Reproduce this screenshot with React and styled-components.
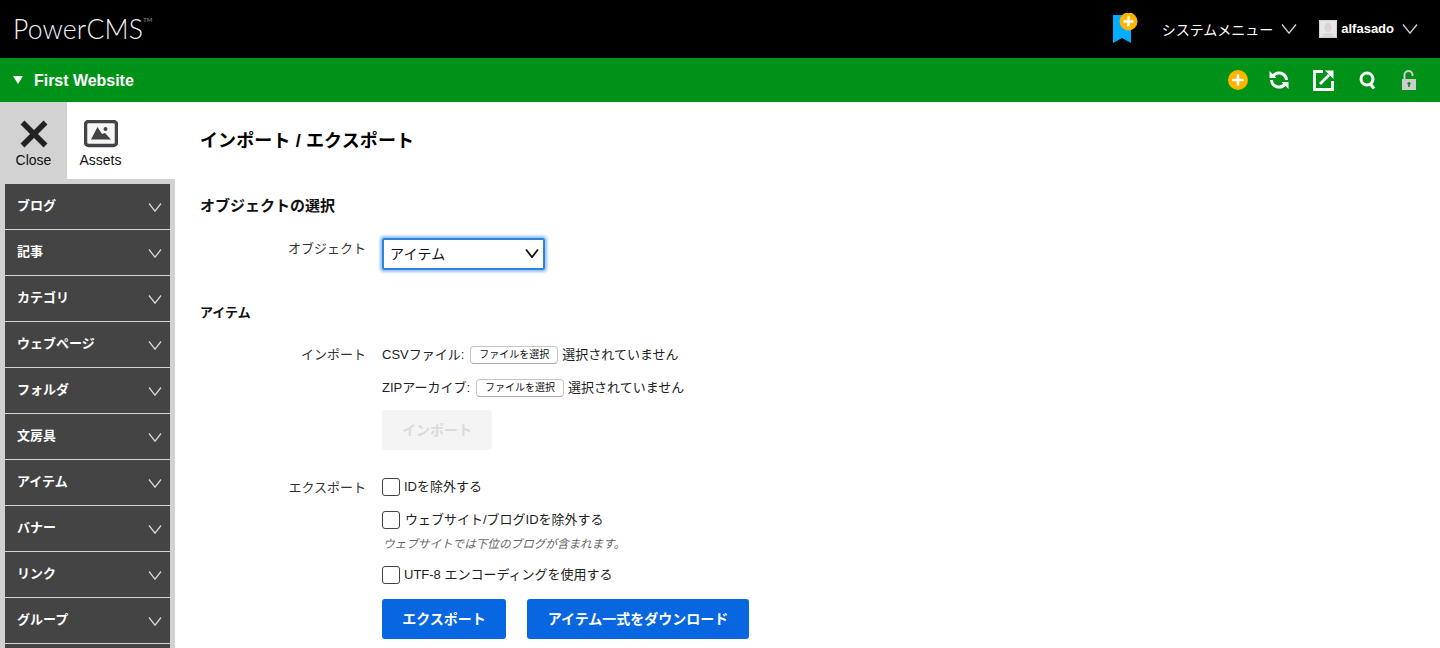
import React from "react";
import styled, { createGlobalStyle } from "styled-components";

const jp = `"Liberation Sans", "Noto Sans CJK JP", sans-serif`;

const GlobalStyle = createGlobalStyle`
  html, body {
    margin: 0;
    height: 100%;
    overflow: hidden;
    background: #fff;
    font-family: ${jp};
    color: #111;
  }
`;

const Page = styled.div`
  height: 648px;
  overflow: hidden;
`;

const TopBar = styled.header`
  height: 58px;
  background: #000;
  display: flex;
  align-items: center;
  padding: 0 22px 0 13px;
`;

const Logo = styled.div`
  font-family: "Lato", "Liberation Sans", sans-serif;
  font-weight: 300;
  font-size: 26.5px;
  letter-spacing: 0.2px;
  color: #f2f2f2;
  display: flex;
  align-items: flex-start;
  sup {
    font-size: 6px;
    line-height: 1;
    margin-top: 4px;
    letter-spacing: 0;
  }
`;

const TopRight = styled.div`
  margin-left: auto;
  display: flex;
  align-items: center;
`;

const TopLink = styled.div`
  display: flex;
  align-items: center;
  gap: ${(p) => p.$gap}px;
  color: #fff;
  font-size: ${(p) => (p.$bold ? 13 : 14)}px;
  font-weight: ${(p) => (p.$bold ? 700 : 400)};
  margin-left: ${(p) => p.$left}px;
  margin-top: -1px;
`;

const UserName = styled.span`
  display: flex;
  align-items: center;
  gap: 4px;
`;

const SiteBar = styled.div`
  height: 44px;
  background: #009118;
  display: flex;
  align-items: center;
  padding: 0 24px 0 13px;
  color: #fff;
`;

const SiteName = styled.div`
  font-size: 16px;
  letter-spacing: -0.03px;
  font-weight: 700;
  margin: 1px 0 0 11px;
`;

const SiteIcons = styled.div`
  margin-left: auto;
  display: flex;
  align-items: center;
`;

const SiteIcon = styled.span`
  display: flex;
  margin-left: ${(p) => p.$left || 0}px;
`;

const Body = styled.div`
  display: flex;
`;

const Sidebar = styled.aside`
  width: 175px;
  flex: none;
`;

const Tabs = styled.div`
  display: flex;
  height: 77px;
`;

const Tab = styled.div`
  width: 67px;
  background: ${(p) => (p.$active ? "#d2d2d2" : "#fff")};
  display: flex;
  flex-direction: column;
  align-items: center;
  padding-top: 18px;
  box-sizing: border-box;
  font-size: 14px;
  color: #111;
  svg {
    display: block;
    margin-bottom: 4px;
  }
`;

const Menu = styled.ul`
  list-style: none;
  margin: 0;
  padding: 5px 5px 0;
  background: #d2d2d2;
  height: 600px;
`;

const MenuItem = styled.li`
  height: 45px;
  margin-bottom: 1px;
  background: #444;
  color: #fff;
  font-size: 13px;
  font-weight: 700;
  display: flex;
  align-items: center;
  justify-content: space-between;
  padding: 0 8px 4px 12px;
  box-sizing: border-box;
  svg {
    margin-top: 5px;
  }
`;

const Main = styled.main`
  flex: 1;
  padding: 28px 0 0 25px;
`;

const Title = styled.h1`
  margin: 0;
  font-size: 18px;
  letter-spacing: 0.12px;
  line-height: 22px;
  font-weight: 700;
  color: #000;
`;

const SectionHead = styled.h2`
  margin: ${(p) => p.$top}px 0 0;
  font-size: ${(p) => p.$size}px;
  line-height: 20px;
  font-weight: 700;
  color: #111;
`;

const FieldRow = styled.div`
  display: grid;
  grid-template-columns: 166px 1fr;
  column-gap: 16px;
  margin-top: ${(p) => p.$top}px;
`;

const FieldLabel = styled.div`
  text-align: right;
  font-size: 13px;
  line-height: 20px;
  color: #333;
  padding-top: ${(p) => p.$pad || 0}px;
`;

const Select = styled.div`
  width: 163px;
  height: 32px;
  box-sizing: border-box;
  border: 2px solid #2f82de;
  box-shadow: 0 0 3px 2px #93c0f2;
  border-radius: 2px;
  display: flex;
  align-items: center;
  justify-content: space-between;
  padding: 0 4px 2px 6px;
  font-size: 14px;
  letter-spacing: 0.2px;
  color: #111;
`;

const FileLine = styled.div`
  display: flex;
  align-items: center;
  height: 20px;
  line-height: 20px;
  margin-bottom: ${(p) => p.$bottom}px;
  font-size: 13px;
  color: #222;
`;

const FileButton = styled.span`
  height: 18px;
  box-sizing: border-box;
  padding: 0 8px;
  margin: 0 4px 0 6px;
  border: 1px solid #c4c4c4;
  border-bottom-color: #aaa;
  border-radius: 4px;
  background: #fff;
  font-size: 10px;
  line-height: 16px;
  color: #111;
`;

const Button = styled.div`
  display: inline-flex;
  align-items: center;
  justify-content: center;
  width: ${(p) => p.$width}px;
  height: 40px;
  padding-bottom: 2px;
  box-sizing: border-box;
  border-radius: 3px;
  background: ${(p) => (p.disabled ? "#f4f4f4" : "#0866e0")};
  color: ${(p) => (p.disabled ? "#dadada" : "#fff")};
  font-size: 14px;
  font-weight: 700;
`;

const CheckLine = styled.label`
  display: flex;
  align-items: center;
  height: 18px;
  line-height: 18px;
  margin-bottom: ${(p) => p.$bottom}px;
  font-size: 13px;
  color: #222;
`;

const Box = styled.span`
  width: 18px;
  height: 18px;
  box-sizing: border-box;
  flex: none;
  border: 1px solid #444;
  border-radius: 3px;
  background: #fff;
  margin-right: ${(p) => p.$gap}px;
`;

const Hint = styled.div`
  font-size: 11.6px;
  font-style: italic;
  line-height: 14px;
  color: #666;
  margin: 0 0 15px 1px;
`;

const ButtonRow = styled.div`
  display: flex;
  gap: 21px;
  margin-top: 15px;
`;

const Chevron = ({ size = 14, h = 9, color = "#d4d4d4", width = 1.3 }) => (
  <svg width={size} height={h} viewBox={`0 0 ${size} ${h}`} fill="none">
    <path d={`M1 0.5L${size / 2} ${h - 0.8}L${size - 1} 0.5`} stroke={color} strokeWidth={width} />
  </svg>
);

const PlusBadge = ({ size = 20 }) => (
  <svg width={size} height={size} viewBox="0 0 20 20">
    <circle cx="10" cy="10" r="10" fill="#ffb400" />
    <path d="M10 4.500v11M4.500 10h11" stroke="#fff" strokeWidth="2.600" />
  </svg>
);

const Bookmark = () => (
  <svg width="32" height="32" viewBox="0 0 32 32">
    <path d="M1 2h18v28l-9-5-9 5z" fill="#00aeff" />
    <circle cx="16.500" cy="8.500" r="9" fill="#ffb400" />
    <path d="M16.500 3.500v10M11.500 8.500h10" stroke="#fff" strokeWidth="2.400" />
  </svg>
);

const UserPic = () => (
  <svg width="18" height="18" viewBox="0 0 18 18">
    <rect width="18" height="18" fill="#e6e6e6" />
    <rect x="0.500" y="0.500" width="17" height="17" fill="none" stroke="#cfcfcf" />
    <ellipse cx="9" cy="7.500" rx="3.500" ry="4.500" fill="#d6d6d6" />
    <path d="M3 17c0-3 3-4 6-4s6 1 6 4z" fill="#d6d6d6" />
  </svg>
);

const RefreshIcon = () => (
  <svg width="20" height="20" viewBox="0 0 20 20" fill="none">
    <path d="M4 6A7.500 7.500 0 0 1 17.500 10M16 14A7.500 7.500 0 0 1 2.500 10" stroke="#fff" strokeWidth="3" />
    <path d="M0.500 1v7h7zM19.500 19v-7h-7z" fill="#fff" />
  </svg>
);

const ExternalIcon = () => (
  <svg width="21" height="21" viewBox="0 0 21 21" fill="none">
    <path d="M10 1.500H1.500v18h18V11" stroke="#fff" strokeWidth="2.800" />
    <path d="M7 14L16 5" stroke="#fff" strokeWidth="2.800" />
    <path d="M12 0.500h8.500V9z" fill="#fff" />
  </svg>
);

const SearchIcon = () => (
  <svg width="17" height="19" viewBox="0 0 17 19" fill="none">
    <circle cx="8" cy="8" r="6" stroke="#fff" strokeWidth="3" />
    <path d="M11 12.500l4 5" stroke="#fff" strokeWidth="3" />
  </svg>
);

const LockIcon = () => (
  <svg width="14" height="20" viewBox="0 0 14 20" fill="none">
    <path d="M2.500 9V5a4 4 0 0 1 8 0v1" stroke="#cdcdcd" strokeWidth="2" />
    <path d="M0 9h14v11H0z" fill="#cdcdcd" />
    <circle cx="7" cy="13.500" r="1.600" fill="#009118" />
    <path d="M6.200 14h1.600v3H6.200z" fill="#009118" />
  </svg>
);

const CloseIcon = () => (
  <svg width="28" height="28" viewBox="0 0 28 28" fill="none">
    <path d="M2.500 2.500l23 23M25.500 2.500l-23 23" stroke="#222" strokeWidth="5.500" />
  </svg>
);

const AssetsIcon = () => (
  <svg width="34" height="28" viewBox="0 0 34 28">
    <rect x="1.500" y="1.500" width="31" height="24" rx="3" fill="#f6f6f6" stroke="#444" strokeWidth="3.500" />
    <path d="M7 19.500L13.500 7 18 14l3-1 6 6.500z" fill="#444" />
    <circle cx="21.500" cy="9" r="2" fill="#444" />
  </svg>
);

const menuItems = ["ブログ", "記事", "カテゴリ", "ウェブページ", "フォルダ", "文房具", "アイテム", "バナー", "リンク", "グループ"];

export default function App() {
  return (
    <Page>
      <GlobalStyle />
      <TopBar>
        <Logo>
          PowerCMS<sup>TM</sup>
        </Logo>
        <TopRight>
          <Bookmark />
          <TopLink $left={18} $gap={8}>
            システムメニュー
            <Chevron size={16} h={10} />
          </TopLink>
          <TopLink $left={22} $gap={8} $bold>
            <UserName>
              <UserPic />
              alfasado
            </UserName>
            <Chevron size={16} h={10} />
          </TopLink>
        </TopRight>
      </TopBar>
      <SiteBar>
        <svg width="10" height="8" viewBox="0 0 10 8">
          <path d="M0 0h10L5 8z" fill="#fff" />
        </svg>
        <SiteName>First Website</SiteName>
        <SiteIcons>
          <SiteIcon><PlusBadge /></SiteIcon>
          <SiteIcon $left={21}><RefreshIcon /></SiteIcon>
          <SiteIcon $left={24}><ExternalIcon /></SiteIcon>
          <SiteIcon $left={25}><SearchIcon /></SiteIcon>
          <SiteIcon $left={26}><LockIcon /></SiteIcon>
        </SiteIcons>
      </SiteBar>
      <Body>
        <Sidebar>
          <Tabs>
            <Tab $active>
              <CloseIcon />
              Close
            </Tab>
            <Tab>
              <AssetsIcon />
              Assets
            </Tab>
          </Tabs>
          <Menu>
            {menuItems.map((item) => (
              <MenuItem key={item}>
                {item}
                <Chevron />
              </MenuItem>
            ))}
            <MenuItem />
          </Menu>
        </Sidebar>
        <Main>
          <Title>インポート / エクスポート</Title>
          <SectionHead $top={44} $size={15}>オブジェクトの選択</SectionHead>
          <FieldRow $top={22}>
            <FieldLabel $pad={1}>オブジェクト</FieldLabel>
            <Select>
              アイテム
              <Chevron size={14} h={9} color="#111" width={1.8} />
            </Select>
          </FieldRow>
          <SectionHead $top={33} $size={13}>アイテム</SectionHead>
          <FieldRow $top={22}>
            <FieldLabel>インポート</FieldLabel>
            <div>
              <FileLine $bottom={13}>
                CSVファイル:
                <FileButton>ファイルを選択</FileButton>
                選択されていません
              </FileLine>
              <FileLine $bottom={12}>
                ZIPアーカイブ:
                <FileButton>ファイルを選択</FileButton>
                選択されていません
              </FileLine>
              <Button disabled $width={110}>インポート</Button>
            </div>
          </FieldRow>
          <FieldRow $top={28}>
            <FieldLabel>エクスポート</FieldLabel>
            <div>
              <CheckLine $bottom={15}>
                <Box $gap={4} />
                IDを除外する
              </CheckLine>
              <CheckLine $bottom={8}>
                <Box $gap={5} />
                ウェブサイト/ブログIDを除外する
              </CheckLine>
              <Hint>ウェブサイトでは下位のブログが含まれます。</Hint>
              <CheckLine $bottom={0}>
                <Box $gap={4} />
                UTF-8 エンコーディングを使用する
              </CheckLine>
              <ButtonRow>
                <Button $width={124}>エクスポート</Button>
                <Button $width={222}>アイテム一式をダウンロード</Button>
              </ButtonRow>
            </div>
          </FieldRow>
        </Main>
      </Body>
    </Page>
  );
}
